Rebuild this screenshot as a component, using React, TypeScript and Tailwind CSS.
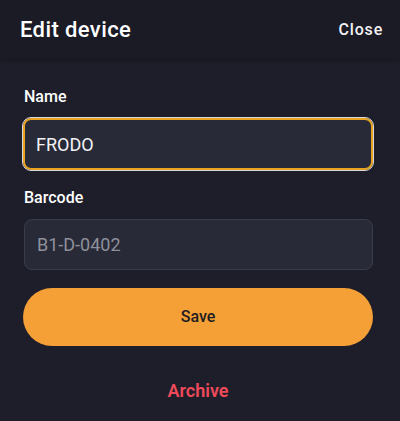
import React, { useState } from 'react';

export default function App() {
    const [name, setName] = useState('FRODO');

    return (
        <div className="w-[400px] h-[421px] bg-[#1e1e2a] text-white font-['Roboto',sans-serif] overflow-hidden">
            {/* header */}
            <div className="h-[59px] pl-5 pr-[17px] flex items-center justify-between bg-[#1b1b26] shadow-[0_2px_4px_rgba(0,0,0,0.25)]">
                <h1 className="text-[22px] font-medium tracking-[0.4px]">Edit device</h1>
                <button className="text-[16px] font-medium tracking-[0.8px] text-[#f1f1f4]">Close</button>
            </div>

            <div className="pl-[23px] pr-[27px] pt-[28px] flex flex-col">
                <label className="text-[16px] leading-5 font-medium mb-[11px] pl-px">Name</label>
                <input
                    value={name}
                    onChange={(e) => setName(e.target.value)}
                    className="h-[52px] px-[11px] rounded-lg bg-[#282a38] text-[18px] text-[#f3f3f5] border-2 border-[#e9a21e] outline-1 outline-[#d8d8dc] focus:outline-none"
                />

                <label className="text-[16px] leading-5 font-medium mt-[18px] mb-[11px] pl-px">Barcode</label>
                <div className="h-[51px] ml-px px-3 rounded-lg bg-[#282a38] border border-[#393c4c] flex items-center text-[18px] text-[#8e909b]">
                    B1-D-0402
                </div>

                <button className="mt-[18px] h-[58px] rounded-full bg-[#f4a037] text-[#1d1d22] text-[16px] font-medium">
                    Save
                </button>

                <button className="mt-[33px] text-[18px] leading-6 font-semibold text-[#ef4a5a]">
                    Archive
                </button>
            </div>
        </div>
    );
}
